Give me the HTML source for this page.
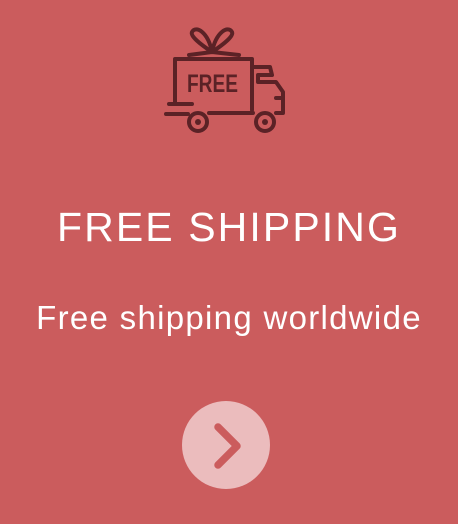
<!DOCTYPE html>
<html><head><style>
html,body{margin:0;padding:0;}
body{width:458px;height:524px;background:#cb5c5d;position:relative;overflow:hidden;font-family:"Liberation Sans",sans-serif;color:#fff;}
.t1{position:absolute;left:0;width:458px;text-align:center;top:202px;font-size:41px;letter-spacing:2.1px;line-height:50px;}
.t2{position:absolute;left:0;width:458px;text-align:center;top:298px;font-size:33px;letter-spacing:1.3px;line-height:40px;}
svg{position:absolute;left:0;top:0;}
</style></head><body>
<svg width="458" height="524" viewBox="0 0 458 524">
<g fill="none" stroke="#5b2226" stroke-width="4" stroke-linecap="round" stroke-linejoin="round">
<path d="M192 104 H175 V59 H252 V110"/>
<path d="M212 52 C200 44 190 36 192 32 C196 25 208 32 212 52 C216 32 228 25 232 32 C234 36 224 44 212 52"/>
<path d="M212 52 L189 55 M212 52 L239 55"/>
<path d="M252 67 H270 L272 75 H258 V82 H276 L283 92 V113 H276"/>
<path d="M276 98 H283"/>
<path d="M209 113 H253"/>
<path d="M169 104 H190 M166 114 H188"/>
<circle cx="198" cy="122" r="9"/>
<circle cx="265" cy="122" r="9"/>
</g>
<circle cx="198" cy="122" r="3" fill="#5b2226"/>
<circle cx="265" cy="122" r="3" fill="#5b2226"/>
<text x="187" y="92" font-family="Liberation Sans" font-weight="bold" font-size="25" fill="#5b2226" textLength="51" lengthAdjust="spacingAndGlyphs">FREE</text>
<circle cx="226" cy="445" r="44" fill="#ebbcbd"/>
<path d="M218 427 L237 446 L218 465" fill="none" stroke="#cb5c5d" stroke-width="7.5" stroke-linecap="round" stroke-linejoin="round"/>
</svg>
<div class="t1">FREE SHIPPING</div>
<div class="t2">Free shipping worldwide</div>
</body></html>
